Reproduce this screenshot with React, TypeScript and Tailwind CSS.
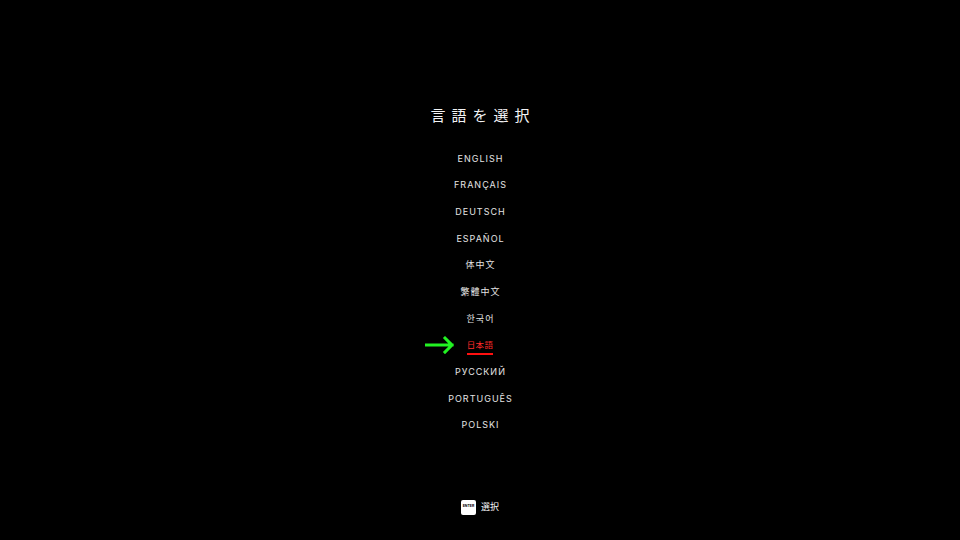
const languages = [
  'ENGLISH',
  'FRANÇAIS',
  'DEUTSCH',
  'ESPAÑOL',
  '体中文',
  '繁體中文',
  '한국어',
  '日本語',
  'РУССКИЙ',
  'PORTUGUÊS',
  'POLSKI',
];

const SELECTED = '日本語';

const fontStack = "font-['Inter','Noto_Sans_CJK_JP','Noto_Sans_CJK_KR',sans-serif]";

function Arrow() {
  return (
    <svg width="30" height="18" viewBox="0 0 30 18" className="absolute right-full mr-[12px] top-1/2 -translate-y-[55%]">
      <path d="M1 9 H27 M20 2 L27 9 L20 16" stroke="#22f222" strokeWidth="3" fill="none" strokeLinecap="square" />
    </svg>
  );
}

export default function App() {
  return (
    <div className={`w-[960px] h-[540px] bg-black text-white flex flex-col items-center ${fontStack}`}>
      <h1 className="mt-[105px] h-[22px] flex items-center text-[15px] tracking-[6px] pl-[6px] text-gray-100">
        言語を選択
      </h1>

      <ul className="mt-[18px] flex flex-col items-center">
        {languages.map((lang) => {
          const selected = lang === SELECTED;
          return (
            <li key={lang} className="h-[26.7px] flex items-center justify-center">
              {selected ? (
                <span className="relative mt-[3px] text-[8.5px] tracking-[0.4px] text-[#ff2a2a] border-b-2 border-[#ff1010] pb-[1px]">
                  <Arrow />
                  {lang}
                </span>
              ) : (
                <span className="text-[9px] font-normal tracking-[1px] pl-[1px] text-[#e4e4e4]">{lang}</span>
              )}
            </li>
          );
        })}
      </ul>

      <div className="mt-[61px] flex items-center gap-[5px]">
        <div className="w-[15px] h-[15px] bg-white rounded-[2px] flex items-center justify-center">
          <span className="text-[3.5px] font-bold text-black leading-none">ENTER</span>
        </div>
        <span className="text-[9px] text-gray-100">選択</span>
      </div>
    </div>
  );
}
